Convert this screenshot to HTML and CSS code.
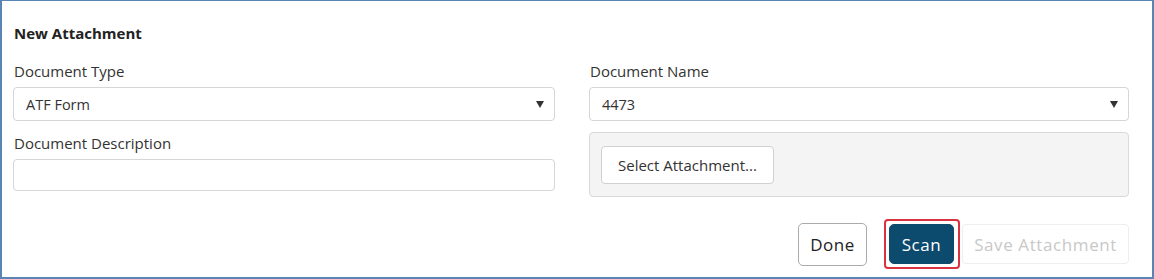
FILE: index.html
```html
<!DOCTYPE html>
<html lang="en">
<head>
    <meta charset="UTF-8" />
    <title>New Attachment</title>
    <link rel="stylesheet" href="styles.css">
</head>
<body>
<div class="frame">
    <h3 class="title">New Attachment</h3>
    <div class="cols">
        <div class="col">
            <label class="lbl">Document Type</label>
            <div class="select">
                <span>ATF Form</span>
                <span class="caret"></span>
            </div>
            <label class="lbl lbl-2">Document Description</label>
            <div class="input"></div>
        </div>
        <div class="col">
            <label class="lbl">Document Name</label>
            <div class="select">
                <span>4473</span>
                <span class="caret"></span>
            </div>
            <div class="panel">
                <button class="btn btn-select">Select Attachment...</button>
            </div>
        </div>
    </div>
    <div class="actions">
        <button class="btn btn-done">Done</button>
        <div class="focus-ring">
            <button class="btn btn-scan">Scan</button>
        </div>
        <button class="btn btn-save" disabled>Save Attachment</button>
    </div>
</div>
</body>
</html>
```

FILE: styles.css
```css
body {
    margin: 0;
    padding: 0;
    font-family: "Open Sans", Arial, sans-serif;
    color: #333;
    background: #fff;
}

.frame {
    box-sizing: border-box;
    width: 1154px;
    height: 279px;
    border: 2px solid #5a84b3;
    border-top-width: 1px;
    padding: 0 23px 0 11px;
}

.title {
    margin: 22px 0 0 1px;
    font-size: 15px;
    font-weight: 700;
    color: #222;
    line-height: 20px;
}

.cols {
    display: flex;
    gap: 34px;
    margin-top: 18px;
}

.col {
    display: flex;
    flex-direction: column;
}

.col:first-child {
    width: 543px;
}

.col:last-child {
    width: 541px;
}

.lbl {
    display: block;
    font-size: 15px;
    line-height: 20px;
    margin-left: 1px;
    color: #333;
}

.lbl-2 {
    margin-top: 12px;
}

.select {
    box-sizing: border-box;
    display: flex;
    align-items: center;
    justify-content: space-between;
    height: 34px;
    margin-top: 6px;
    padding: 0 10px 0 12px;
    border: 1px solid #d6d6d6;
    border-radius: 4px;
    font-size: 14.5px;
}

.caret {
    width: 0;
    height: 0;
    border-left: 4px solid transparent;
    border-right: 4px solid transparent;
    border-top: 7px solid #333;
}

.input {
    box-sizing: border-box;
    height: 32px;
    margin-top: 6px;
    border: 1px solid #d6d6d6;
    border-radius: 4px;
}

.panel {
    box-sizing: border-box;
    height: 65px;
    margin-top: 11px;
    padding: 13px 11px;
    background: #f4f4f4;
    border: 1px solid #d9d9d9;
    border-radius: 4px;
}

.btn {
    box-sizing: border-box;
    font-family: "Open Sans", Arial, sans-serif;
    border-radius: 4px;
    background: #fff;
    cursor: pointer;
}

.btn-select {
    height: 38px;
    padding: 0 16px;
    font-size: 15px;
    color: #333;
    border: 1px solid #d0d0d0;
}

.actions {
    display: flex;
    justify-content: flex-end;
    align-items: center;
    margin-top: 22px;
}

.btn-done {
    height: 43px;
    padding: 0 11px;
    font-size: 17px;
    letter-spacing: 0.5px;
    color: #222;
    border: 1px solid #aaa;
    border-radius: 5px;
}

.focus-ring {
    margin-left: 17px;
    padding: 3px 4px 3px 3px;
    border: 2px solid #d9333f;
    border-radius: 4px;
}

.btn-scan {
    display: block;
    height: 40px;
    padding: 0 12px;
    font-size: 17px;
    letter-spacing: 0.5px;
    color: #fff;
    background: #0c4a6e;
    border: 1px solid #0c4a6e;
    border-radius: 5px;
}

.btn-save {
    height: 40px;
    margin-left: 2px;
    padding: 0 11px;
    font-size: 17px;
    letter-spacing: 0.6px;
    color: #c8c8c8;
    border: 1px solid #eee;
    cursor: default;
}
```
